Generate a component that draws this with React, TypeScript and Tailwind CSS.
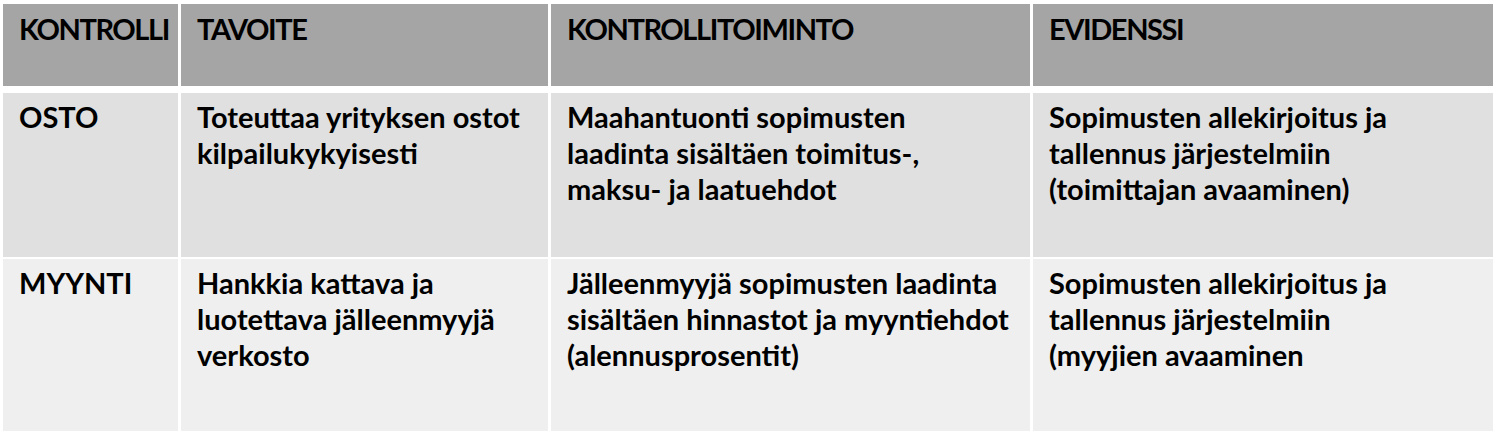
const rows = [
  {
    kontrolli: "OSTO",
    tavoite: ["Toteuttaa yrityksen ostot", "kilpailukykyisesti"],
    toiminto: ["Maahantuonti sopimusten", "laadinta sisältäen toimitus-,", "maksu- ja laatuehdot"],
    evidenssi: ["Sopimusten allekirjoitus ja", "tallennus järjestelmiin", "(toimittajan avaaminen)"],
    bg: "bg-[#e0e0e0]",
    height: "h-[164px]",
  },
  {
    kontrolli: "MYYNTI",
    tavoite: ["Hankkia kattava ja", "luotettava jälleenmyyjä", "verkosto"],
    toiminto: ["Jälleenmyyjä sopimusten laadinta", "sisältäen hinnastot ja myyntiehdot", "(alennusprosentit)"],
    evidenssi: ["Sopimusten allekirjoitus ja", "tallennus järjestelmiin", "(myyjien avaaminen"],
    bg: "bg-[#efefef]",
    height: "h-[172px]",
  },
];

function Cell({ lines, bg, className = "" }: { lines: string[]; bg: string; className?: string }) {
  return (
    <div className={`${bg} pl-[16px] ${className}`}>
      {lines.map((l, i) => (
        <div key={i} className="whitespace-nowrap">{l}</div>
      ))}
    </div>
  );
}

export default function App() {
  return (
    <div className="w-[1501px] h-[437px] bg-white pl-[3px] pt-[4px] font-['Lato','Open_Sans',sans-serif] font-bold text-[29px] leading-[36px] text-black">
      <div className="grid grid-cols-[175px_367px_479px_460px] gap-x-[3px] w-[1490px]">
        {["KONTROLLI", "TAVOITE", "KONTROLLITOIMINTO", "EVIDENSSI"].map((h) => (
          <Cell key={h} lines={[h]} bg="bg-[#a5a5a5]" className="h-[82px] mb-[7px] pt-[7px] tracking-[-1.4px]" />
        ))}
        {rows.map((r, i) => (
          <div key={r.kontrolli} className="contents">
            <Cell lines={[r.kontrolli]} bg={r.bg} className={`${r.height} pt-[6px] ${i === 0 ? "mb-[2px]" : ""}`} />
            <Cell lines={r.tavoite} bg={r.bg} className={`${r.height} pt-[6px]`} />
            <Cell lines={r.toiminto} bg={r.bg} className={`${r.height} pt-[6px]`} />
            <Cell lines={r.evidenssi} bg={r.bg} className={`${r.height} pt-[6px]`} />
          </div>
        ))}
      </div>
    </div>
  );
}
